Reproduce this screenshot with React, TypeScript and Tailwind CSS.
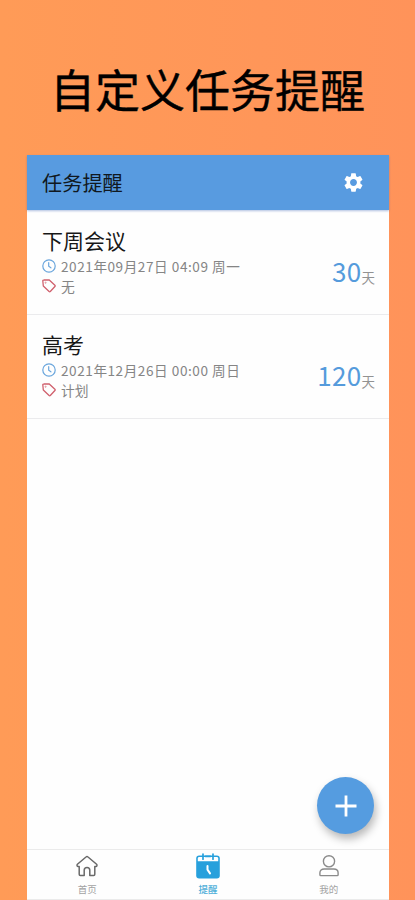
import { MdSettings } from "react-icons/md";

const tasks = [
  { title: "下周会议", date: "2021年09月27日 04:09 周一", tag: "无", days: 30 },
  { title: "高考", date: "2021年12月26日 00:00 周日", tag: "计划", days: 120 },
];

function ClockIcon() {
  return (
    <svg viewBox="0 0 14 14" className="size-[14px] text-[#69a5dc]" fill="none" stroke="currentColor" strokeWidth="1.2" strokeLinecap="round">
      <circle cx="7" cy="7" r="6.2" />
      <path d="M6.7 3.7v3.6l2.2 1.5" />
    </svg>
  );
}

function TagIcon() {
  return (
    <svg viewBox="0 0 14 14" className="size-[14px] text-[#d0606d]" fill="none" stroke="currentColor" strokeWidth="1.3" strokeLinejoin="round">
      <path d="M.8 1.8Q.8 1 1.6 1L7 .8l5.9 5.5q.6.6 0 1.2l-4.6 5q-.6.6-1.2 0L1.3 7z" />
      <circle cx="3.6" cy="3.7" r=".6" strokeWidth=".6" />
    </svg>
  );
}

function HomeIcon() {
  return (
    <svg viewBox="0 0 24 24" className="size-6" fill="none" stroke="#696969" strokeWidth="1.5" strokeLinejoin="round" strokeLinecap="round">
      <path d="M11 3q1-.9 2 0l8.6 7.3c.8.8.3 2.2-.7 2.2h-1.1v7.8c0 .7-.4 1.1-1.1 1.1h-3.9v-5.2a2.8 2.8 0 0 0-5.6 0v5.2H5.3c-.7 0-1.1-.4-1.1-1.1v-7.8H3.1c-1 0-1.5-1.4-.7-2.2z" />
    </svg>
  );
}

function CalendarIcon() {
  return (
    <svg viewBox="0 0 26 28" className="h-7 w-[26px]" fill="none">
      <rect x="1.2" y="3.5" width="23.6" height="23" rx="3" fill="#27a0dc" />
      <path d="M2.8 9.3V6.6c0-1 .5-1.6 1.5-1.6h17.4c1 0 1.5.6 1.5 1.6v2.7z" fill="#fff" />
      <path d="M8 2v5.2M18 2v5.2M10.5 4.3h5" stroke="#27a0dc" strokeWidth="1.7" strokeLinecap="round" />
      <path d="M12.5 14v3.6l2.5 3.8" stroke="#fff" strokeWidth="2" strokeLinecap="round" strokeLinejoin="round" />
    </svg>
  );
}

function UserIcon() {
  return (
    <svg viewBox="0 0 24 24" className="size-6" fill="none" stroke="#8b8b8b" strokeWidth="1.4" strokeLinejoin="round">
      <circle cx="12" cy="7.3" r="5.6" />
      <path d="M7.2 15h9.6c2.6 0 4.3 1.6 4.3 3.8v2c0 .5-.3.8-.8.8H3.7c-.5 0-.8-.3-.8-.8v-2c0-2.2 1.7-3.8 4.3-3.8z" />
    </svg>
  );
}

export default function App() {
  return (
    <main className="flex h-[900px] w-[415px] flex-col bg-linear-to-r from-[#ff9b57] to-[#ff935a] font-['Noto_Sans_CJK_SC',sans-serif]">
      <h1 className="h-[155px] pt-[56px] text-center text-[45px] leading-[66px] text-black [-webkit-text-stroke:0.4px_black]">
        自定义任务提醒
      </h1>

      <section className="relative ml-[27px] flex w-[362px] flex-1 flex-col bg-[#fefefe]">
        <header className="z-10 flex h-[55px] items-center justify-between bg-[#589be0] pl-[15px] pr-[24px] shadow-[0_1px_2px_rgba(60,100,180,0.4)]">
          <h2 className="text-[20.2px] leading-7 text-[#101820]">任务提醒</h2>
          <MdSettings className="size-[23px] text-white" />
        </header>

        <ul className="pt-px">
          {tasks.map((task) => (
            <li key={task.title} className="flex h-[104px] justify-between border-b border-[#ebebed] pl-[15px] pr-[14px]">
              <div className="pt-[14px]">
                <h3 className="text-[21px] leading-[31px] text-[#171717]">{task.title}</h3>
                <p className="flex h-5 items-center gap-[5px] text-[#858585]">
                  <ClockIcon />
                  <span className="whitespace-nowrap text-[13.6px] leading-5 tracking-[0.55px]">{task.date}</span>
                </p>
                <p className="flex h-5 items-center gap-[5px] text-[#858585]">
                  <TagIcon />
                  <span className="text-[13.8px] leading-5">{task.tag}</span>
                </p>
              </div>
              <p className="flex items-baseline pt-[41px] text-[#559bdc]">
                <span className="text-[26px] leading-[38px] tracking-[0.3px]">{task.days}</span>
                <span className="relative top-px text-[13.5px] text-[#929292]">天</span>
              </p>
            </li>
          ))}
        </ul>

        <button aria-label="添加" className="absolute right-[15px] top-[622px] flex size-[57px] items-center justify-center rounded-full bg-[#559ce0] shadow-[2px_5px_8px_rgba(0,0,0,0.28)]">
          <svg viewBox="0 0 22 22" className="size-[22px]" stroke="#fff" strokeWidth="2.8">
            <path d="M11 .5v21M.5 11h21" />
          </svg>
        </button>

        <nav className="mt-auto grid h-[51px] grid-cols-3 border-y border-[#ebebeb] text-[9.5px] leading-[14px] text-[#a2a2a2]">
          <div className="flex flex-col items-center pt-1">
            <HomeIcon />
            <span className="mt-[4px]">首页</span>
          </div>
          <div className="flex flex-col items-center pt-[2px] font-medium text-[#4eaed9]">
            <CalendarIcon />
            <span className="mt-[2px]">提醒</span>
          </div>
          <div className="flex flex-col items-center pt-1">
            <UserIcon />
            <span className="mt-[4px]">我的</span>
          </div>
        </nav>
      </section>
    </main>
  );
}
